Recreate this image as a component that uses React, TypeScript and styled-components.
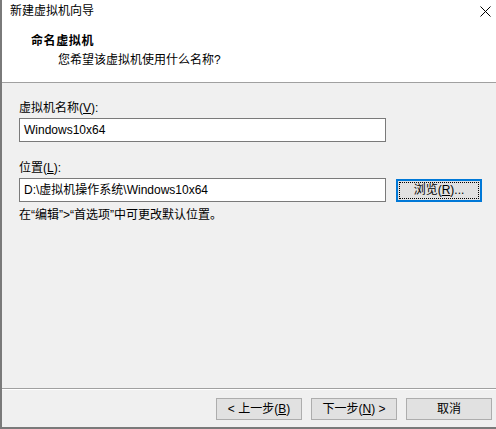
import React from "react";
import styled, { createGlobalStyle } from "styled-components";

const GlobalStyle = createGlobalStyle`
  html, body {
    margin: 0;
    padding: 0;
    background: #f0f0f0;
  }
  body {
    font-family: "Liberation Sans", "Noto Sans CJK SC", sans-serif;
    font-size: 12px;
    color: #000;
  }
`;

const Window = styled.div`
  width: 496px;
  height: 429px;
  box-sizing: border-box;
  border-left: 2px solid #7a7a7a;
  border-bottom: 2px solid #7a7a7a;
  background: #f0f0f0;
  display: flex;
  flex-direction: column;
`;

const Header = styled.div`
  height: 82px;
  flex: 0 0 82px;
  background: #fff;
  border-bottom: 1px solid #a0a0a0;
  display: flex;
  flex-direction: column;
`;

const TitleBar = styled.div`
  height: 24px;
  display: flex;
  align-items: center;
  justify-content: space-between;
  padding: 0 5px 0 8px;
  line-height: 24px;
  margin-top: -1px;
`;

const CloseButton = styled.div`
  width: 12px;
  height: 12px;
  display: flex;
  align-items: center;
  justify-content: center;
  margin-top: 1px;
`;

const Heading = styled.div`
  margin-top: 10px;
  padding-left: 29px;
  font-weight: bold;
  line-height: 17px;
  letter-spacing: 0.6px;
`;

const SubHeading = styled.div`
  padding-left: 56px;
  line-height: 18px;
  margin-top: 1px;
`;

const Body = styled.div`
  flex: 1;
  padding: 17px 0 0 17px;
  display: flex;
  flex-direction: column;
`;

const Label = styled.div<{ $gap?: number }>`
  line-height: 16px;
  margin-top: ${(p) => p.$gap ?? 0}px;
`;

const Row = styled.div`
  display: flex;
  align-items: center;
  gap: 10px;
  margin-top: 2px;
`;

const TextBox = styled.div<{ $flush?: boolean }>`
  width: 367px;
  height: 24px;
  box-sizing: border-box;
  border: 1px solid #7a7a7a;
  background: #fff;
  padding-left: 4px;
  line-height: 22px;
  white-space: nowrap;
  margin-top: ${(p) => (p.$flush ? 0 : 2)}px;
`;

const Button = styled.div<{ $focused?: boolean }>`
  position: relative;
  width: 86px;
  height: ${(p) => (p.$focused ? 23 : 22)}px;
  box-sizing: border-box;
  background: #e1e1e1;
  border: ${(p) => (p.$focused ? "2px solid #0078d7" : "1px solid #adadad")};
  display: flex;
  align-items: center;
  justify-content: center;
  line-height: 16px;
  white-space: nowrap;

  ${(p) =>
    p.$focused &&
    `
    &::after {
      content: "";
      position: absolute;
      inset: 1px;
      border: 1px dotted #000;
    }
  `}
`;

const Hint = styled.div`
  line-height: 16px;
  margin-top: 5px;
`;

const Footer = styled.div`
  flex: 0 0 auto;
  border-top: 1px solid #a0a0a0;
  box-shadow: inset 0 1px 0 #fff;
  padding: 9px 4px 7px 0;
  display: flex;
  justify-content: flex-end;
  gap: 9px;
`;

const Key = styled.u`
  text-underline-offset: 1px;
`;

export default function App() {
  return (
    <>
      <GlobalStyle />
      <Window>
        <Header>
          <TitleBar>
            <span>新建虚拟机向导</span>
            <CloseButton>
              <svg width="11" height="11" viewBox="0 0 11 11">
                <path d="M0.5 0.5 L10.5 10.5 M10.5 0.5 L0.5 10.5" stroke="#000" strokeWidth="1" />
              </svg>
            </CloseButton>
          </TitleBar>
          <Heading>命名虚拟机</Heading>
          <SubHeading>您希望该虚拟机使用什么名称?</SubHeading>
        </Header>
        <Body>
          <Label>
            虚拟机名称(<Key>V</Key>):
          </Label>
          <TextBox>Windows10x64</TextBox>
          <Label $gap={18}>
            位置(<Key>L</Key>):
          </Label>
          <Row>
            <TextBox $flush>D:\虚拟机操作系统\Windows10x64</TextBox>
            <Button $focused>
              浏览(<Key>R</Key>)...
            </Button>
          </Row>
          <Hint>在“编辑”&gt;“首选项”中可更改默认位置。</Hint>
        </Body>
        <Footer>
          <Button>
            &lt; 上一步(<Key>B</Key>)
          </Button>
          <Button>
            下一步(<Key>N</Key>) &gt;
          </Button>
          <Button>取消</Button>
        </Footer>
      </Window>
    </>
  );
}
